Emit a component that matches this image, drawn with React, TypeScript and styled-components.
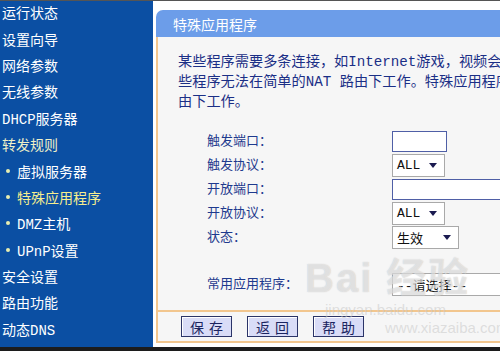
import React from 'react';
import styled, { createGlobalStyle } from 'styled-components';

const Global = createGlobalStyle`
    html, body {
        margin: 0;
        padding: 0;
        background: #1c1c1c;
        overflow: hidden;
    }
    * { box-sizing: border-box; }
`

const font = `"Liberation Mono", "Noto Sans CJK SC", monospace`;

const Page = styled.div`
    width: 500px;
    height: 347px;
    display: flex;
    background: #ffffff;
    border-top: 1px solid #555;
    position: relative;
    overflow: hidden;
    font-family: ${font};
`

const Sidebar = styled.nav`
    width: 153px;
    flex-shrink: 0;
    background: #0b4fa3;
    display: flex;
    flex-direction: column;
    margin-top: -2px;
`

const MenuItem = styled.div<{ $sub?: boolean; $active?: boolean; $group?: boolean }>`
    height: 26.4px;
    display: flex;
    align-items: center;
    padding-left: ${p => (p.$sub ? '17px' : '2px')};
    position: relative;
    font-size: 14px;
    color: ${p => (p.$active ? '#f6ee8e' : p.$group ? '#eef0c8' : '#ffffff')};
    white-space: nowrap;

    ${p => p.$sub && `
        &::before {
            content: '';
            position: absolute;
            left: 6px;
            top: 50%;
            width: 4px;
            height: 4px;
            margin-top: -2px;
            border-radius: 50%;
            background: #e8eeb0;
        }
    `}
`

const Main = styled.main`
    flex: 1;
    min-width: 0;
    padding: 9px 0 0 3px;
    overflow: hidden;
`

const Panel = styled.section`
    width: 440px;
    display: flex;
    flex-direction: column;
`

const Header = styled.div`
    height: 27px;
    background: #6c9de9;
    border-radius: 7px 0 0 0;
    color: #ffffff;
    font-size: 14px;
    display: flex;
    align-items: center;
    padding-left: 17px;
`

const Body = styled.div`
    background: #f6f6f6;
    border-left: 2px solid #f2c68e;
    padding: 15px 0 14px 20px;
    overflow: hidden;
`

const Desc = styled.div`
    color: #1b2f86;
    font-size: 14.2px;
    line-height: 20px;
    white-space: nowrap;
`

const Form = styled.div`
    margin-top: 17px;
    padding-left: 29px;
    display: flex;
    flex-direction: column;
`

const Row = styled.div<{ $gap?: number }>`
    height: 24px;
    display: flex;
    align-items: center;
    margin-top: ${p => p.$gap ?? 0}px;
`

const Label = styled.div`
    width: 185px;
    flex-shrink: 0;
    color: #1e3a8e;
    font-size: 13px;
    white-space: nowrap;
    margin-top: -4px;
`

const TextInput = styled.div<{ $w: number }>`
    width: ${p => p.$w}px;
    flex-shrink: 0;
    height: 21px;
    background: #ffffff;
    border: 1px solid #4f5fa6;
`

const Select = styled.div<{ $w: number }>`
    width: ${p => p.$w}px;
    flex-shrink: 0;
    height: 23px;
    background: #ffffff;
    border: 1px solid #a9a9a9;
    display: flex;
    align-items: center;
    justify-content: space-between;
    padding: 0 7px 0 4px;
    font-size: 13px;
    color: #111;
`

const Arrow = () => (
    <svg width="8" height="5" viewBox="0 0 8 5">
        <path d="M0 0 L8 0 L4 5 Z" fill="#1a1a50" />
    </svg>
)

const Footer = styled.div`
    height: 33px;
    background: #f6f6f6;
    border-top: 2px solid #f2c68e;
    border-bottom: 2px solid #f2c68e;
    border-left: 2px solid #f2c68e;
    display: flex;
    align-items: center;
    gap: 15px;
    padding-left: 23px;
`

const Button = styled.button`
    width: 51px;
    height: 21px;
    background: #d9dcf7;
    border: 1px solid #2b3468;
    box-shadow: inset 1px 1px 0 #ffffff;
    font-family: ${font};
    font-size: 14px;
    color: #1b2460;
    letter-spacing: 5px;
    padding: 0 0 0 5px;
    display: flex;
    align-items: center;
    justify-content: center;
`

const Watermark = styled.div`
    position: absolute;
    left: 305px;
    top: 254px;
    display: flex;
    flex-direction: column;
    align-items: flex-start;
    pointer-events: none;
    font-family: "Liberation Sans", "Noto Sans CJK SC", sans-serif;
    color: rgba(255, 255, 255, 0.5);
    text-shadow: 0 0 1px rgba(140, 140, 140, 0.5);
`

const MarkBig = styled.div`
    font-size: 40px;
    font-weight: bold;
    line-height: 46px;
    letter-spacing: 2px;
`

const MarkSmall = styled.div<{ $indent: number }>`
    font-size: 15px;
    line-height: 18px;
    padding-left: ${p => p.$indent}px;
    color: rgba(200, 200, 200, 0.55);
    text-shadow: none;
`

const menu = [
    { text: '运行状态' },
    { text: '设置向导' },
    { text: '网络参数' },
    { text: '无线参数' },
    { text: 'DHCP服务器' },
    { text: '转发规则', group: true },
    { text: '虚拟服务器', sub: true },
    { text: '特殊应用程序', sub: true, active: true },
    { text: 'DMZ主机', sub: true },
    { text: 'UPnP设置', sub: true },
    { text: '安全设置' },
    { text: '路由功能' },
    { text: '动态DNS' },
]

export default function App() {
    return (
        <Page>
            <Global />
            <Sidebar>
                {menu.map(m => (
                    <MenuItem key={m.text} $sub={m.sub} $active={m.active} $group={m.group}>
                        {m.text}
                    </MenuItem>
                ))}
            </Sidebar>
            <Main>
                <Panel>
                    <Header>特殊应用程序</Header>
                    <Body>
                        <Desc>
                            <div>某些程序需要多条连接，如Internet游戏，视频会议，网络电话等。由于防火墙的存在，这</div>
                            <div>些程序无法在简单的NAT 路由下工作。特殊应用程序使得某些这样的应用程序能够在NAT路</div>
                            <div>由下工作。</div>
                        </Desc>
                        <Form>
                            <Row>
                                <Label>触发端口：</Label>
                                <TextInput $w={55} />
                            </Row>
                            <Row>
                                <Label>触发协议：</Label>
                                <Select $w={53}>ALL<Arrow /></Select>
                            </Row>
                            <Row>
                                <Label>开放端口：</Label>
                                <TextInput $w={160} />
                            </Row>
                            <Row>
                                <Label>开放协议：</Label>
                                <Select $w={53}>ALL<Arrow /></Select>
                            </Row>
                            <Row>
                                <Label>状态：</Label>
                                <Select $w={67}>生效<Arrow /></Select>
                            </Row>
                            <Row $gap={23}>
                                <Label>常用应用程序：</Label>
                                <Select $w={160}>--请选择--<span /></Select>
                            </Row>
                        </Form>
                    </Body>
                    <Footer>
                        <Button>保存</Button>
                        <Button>返回</Button>
                        <Button>帮助</Button>
                    </Footer>
                </Panel>
            </Main>
            <Watermark>
                <MarkBig>Bai 经验</MarkBig>
                <MarkSmall $indent={20}>jingyan.baidu.com</MarkSmall>
                <MarkSmall $indent={80}>www.xiazaiba.com</MarkSmall>
            </Watermark>
        </Page>
    )
}
